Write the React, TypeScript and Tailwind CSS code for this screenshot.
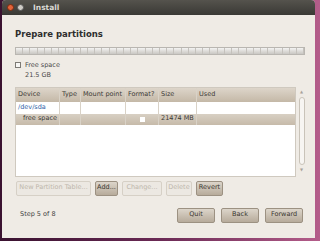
import React from "react";

const font = { fontFamily: '"DejaVu Sans", "Liberation Sans", sans-serif' };

function Btn({ label, enabled, w }: { label: string; enabled?: boolean; w: string }) {
  return (
    <div
      className={
        "flex h-[15px] items-center justify-center whitespace-nowrap rounded-[2px] border text-[6.5px] " +
        w +
        (enabled
          ? " border-[#9c9182] bg-gradient-to-b from-[#dcd5ca] to-[#b7ab9b] text-[#3a3630]"
          : " border-[#d6d0c6] bg-[#ece8e2] text-[#bdb6ab]")
      }
    >
      {label}
    </div>
  );
}

const cols = ["w-[44px]", "w-[21px]", "w-[45px]", "w-[33px]", "w-[38px]", "flex-1"];

function Row({ cells, className }: { cells: React.ReactNode[]; className: string }) {
  return (
    <div className={"flex " + className}>
      {cells.map((c, i) => (
        <div key={i} className={"flex items-center px-[2px] " + cols[i] + (i < 5 ? " border-r border-[#d9d2c7]" : "")}>
          {c}
        </div>
      ))}
    </div>
  );
}

export default function App() {
  return (
    <div className="h-[241px] w-[320px] bg-gradient-to-r from-[#3a1230] via-[#6b2a55] to-[#b45d8a] pb-[3px] pl-[2px] pr-[5px]" style={font}>
      <div className="flex h-full flex-col overflow-hidden rounded-t-[4px] bg-[#efebe5]">
        <div className="flex h-[15px] items-center bg-gradient-to-b from-[#55534d] to-[#3a3935] pl-[5px]">
          <div className="h-[7px] w-[7px] rounded-full border border-[#7a2a10] bg-[#e2643a]" />
          <div className="ml-[3px] h-[7px] w-[7px] rounded-full border border-[#555] bg-[#cfccc6]" />
          <span className="ml-[9px] text-[7.5px] font-bold text-[#dcdad5]">Install</span>
        </div>
        <div className="flex flex-1 flex-col px-[13px]">
          <div className="mt-[13px] text-[8.5px] font-bold text-[#2e2e2e]">Prepare partitions</div>
          <div className="mt-[6px] flex h-[8px] w-[290px] overflow-hidden border border-[#b9b6b1] bg-gradient-to-b from-[#f4f4f3] via-[#dedcd9] to-[#c9c7c3]">
            {Array.from({ length: 40 }).map((_, i) => (
              <div key={i} className="h-full flex-1 border-r border-[#c4c1bc]" />
            ))}
          </div>
          <div className="mt-[5px] flex items-start">
            <div className="mt-[2px] h-[6px] w-[6px] border border-[#7d7a75] bg-[#f7f6f4]" />
            <div className="ml-[4px] text-[6.5px] leading-[10px] text-[#4a4a4a]">
              <div>Free space</div>
              <div>21.5 GB</div>
            </div>
          </div>
          <div className="mt-[7px] flex h-[90px] w-[290px]">
            <div className="flex w-[282px] flex-col border border-[#cfc9bf] bg-white text-[6.5px] text-[#3c3a36]">
              <Row
                className="h-[14px] bg-gradient-to-b from-[#ddd5ca] to-[#c4b8a7]"
                cells={["Device", "Type", "Mount point", "Format?", "Size", "Used"]}
              />
              <Row className="h-[12px] text-[#2f5fa8]" cells={["/dev/sda", "", "", "", "", ""]} />
              <Row
                className="h-[11px] bg-gradient-to-b from-[#d8d0c4] to-[#c6baa9]"
                cells={[
                  <span className="pl-[5px]">free space</span>,
                  "",
                  "",
                  <div className="mx-auto h-[5px] w-[5px] bg-white" />,
                  "21474 MB",
                  "",
                ]}
              />
            </div>
            <div className="ml-[2px] flex w-[7px] flex-col items-center">
              <div className="mt-[3px] text-[4px] leading-[4px] text-[#a8a29a]">▲</div>
              <div className="mt-[3px] h-[68px] w-[6px] rounded-[3px] border border-[#c9c3b9] bg-[#f7f5f2]" />
              <div className="mt-[3px] text-[4px] leading-[4px] text-[#a8a29a]">▼</div>
            </div>
          </div>
          <div className="mt-[4px] flex gap-[4px] pl-[1px]">
            <Btn label="New Partition Table..." w="w-[75px]" />
            <Btn label="Add..." enabled w="w-[23px]" />
            <Btn label="Change..." w="w-[40px]" />
            <Btn label="Delete" w="w-[26px]" />
            <Btn label="Revert" enabled w="w-[27px]" />
          </div>
          <div className="mt-[12px] flex items-center">
            <span className="ml-[5px] text-[6.5px] text-[#3f3f3f]">Step 5 of 8</span>
            <div className="ml-auto mr-[-1px] flex gap-[6px]">
              <Btn label="Quit" enabled w="w-[38px]" />
              <Btn label="Back" enabled w="w-[38px]" />
              <Btn label="Forward" enabled w="w-[38px]" />
            </div>
          </div>
        </div>
      </div>
    </div>
  );
}
